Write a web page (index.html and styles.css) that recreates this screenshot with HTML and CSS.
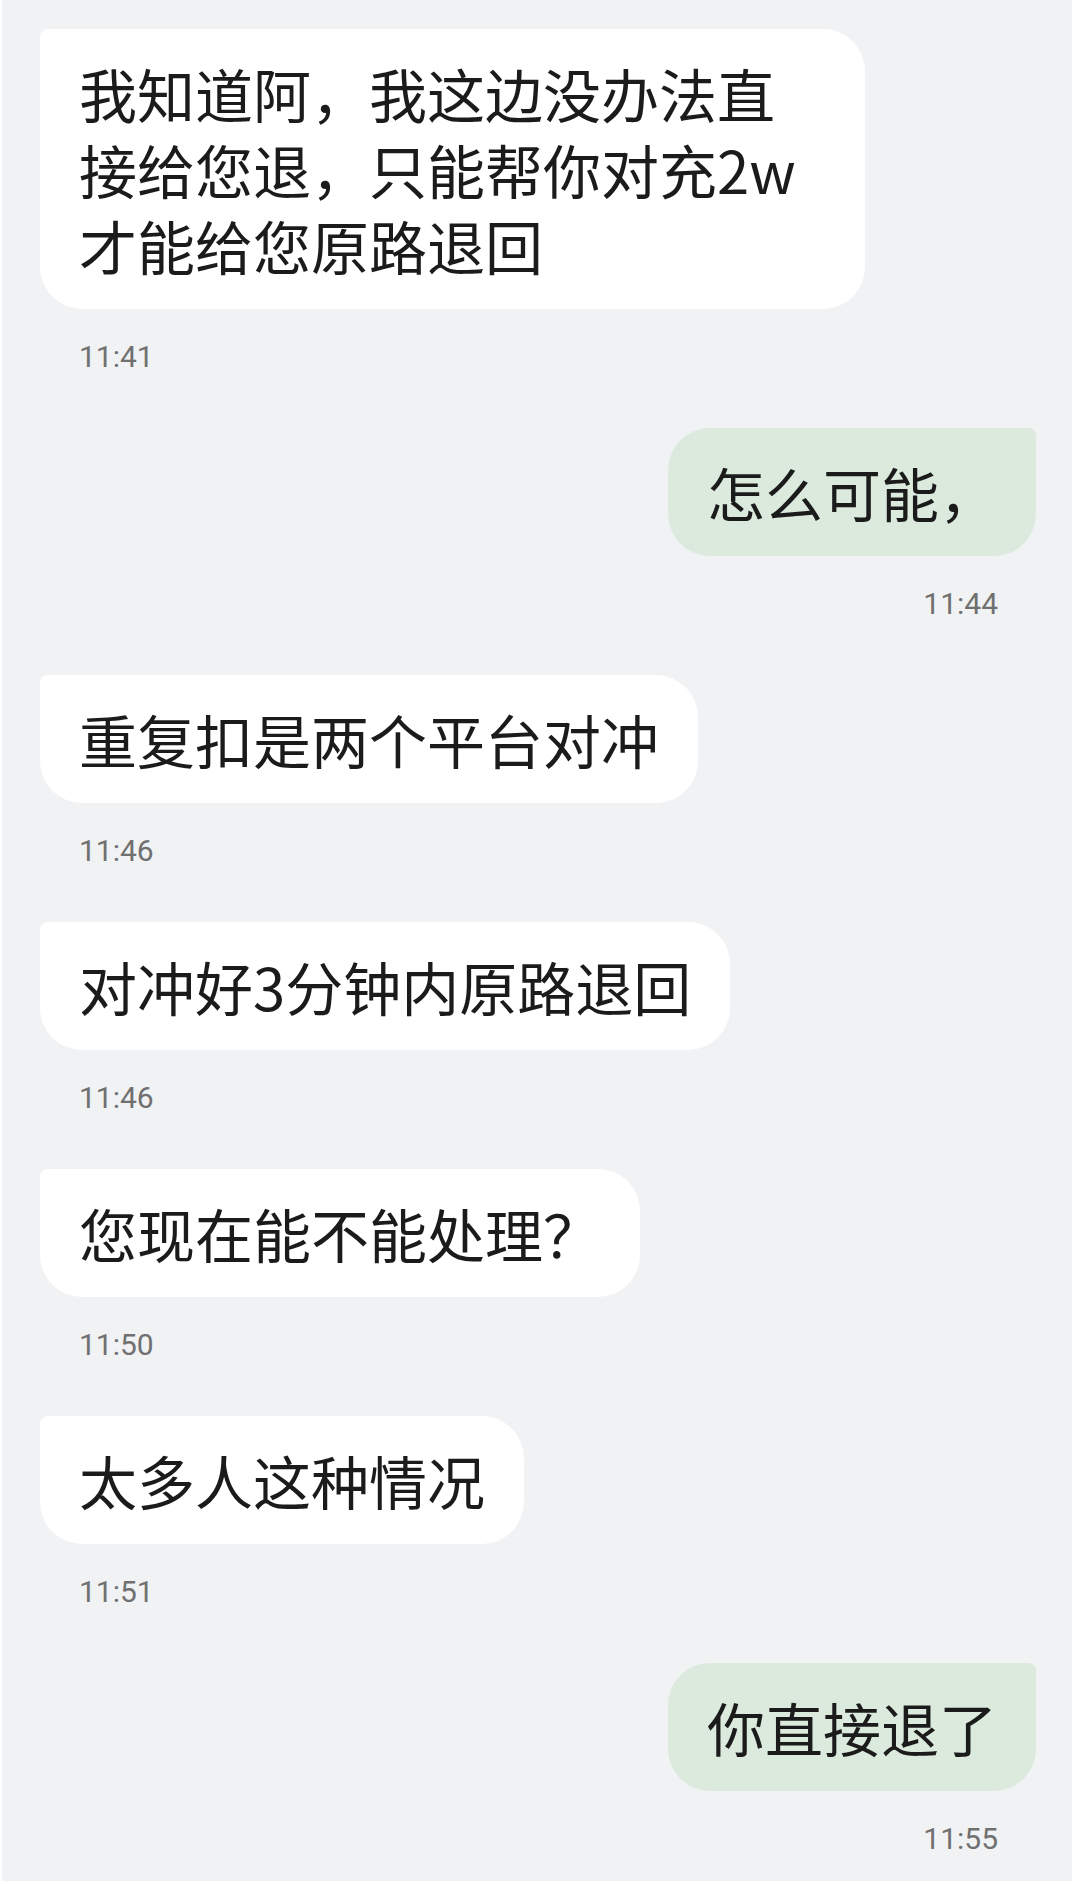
FILE: index.html
```html
<!DOCTYPE html>
<html lang="zh-CN">
<head>
  <meta charset="UTF-8" />
  <meta name="viewport" content="width=device-width, initial-scale=1" />
  <title>聊天记录</title>
  <link rel="stylesheet" href="styles.css">
</head>
<body>
  <main class="chat">
    <div class="msg in">
      <div class="bubble">我知道阿，我这边没办法直接给您退，只能帮你对充2w才能给您原路退回</div>
      <div class="time">11:41</div>
    </div>
    <div class="msg out">
      <div class="bubble">怎么可能，</div>
      <div class="time">11:44</div>
    </div>
    <div class="msg in">
      <div class="bubble">重复扣是两个平台对冲</div>
      <div class="time">11:46</div>
    </div>
    <div class="msg in">
      <div class="bubble">对冲好3分钟内原路退回</div>
      <div class="time">11:46</div>
    </div>
    <div class="msg in">
      <div class="bubble">您现在能不能处理？</div>
      <div class="time">11:50</div>
    </div>
    <div class="msg in">
      <div class="bubble">太多人这种情况</div>
      <div class="time">11:51</div>
    </div>
    <div class="msg out">
      <div class="bubble">你直接退了</div>
      <div class="time">11:55</div>
    </div>
  </main>
</body>
</html>
```

FILE: styles.css
```css
html, body {
  margin: 0;
  padding: 0;
  background: #fff;
}
body {
  font-family: "Noto Sans CJK SC", "Noto Sans", sans-serif;
  color: #1b1b1b;
}
.chat {
  margin: 0 8px 3px 2px;
  height: 1881px;
  box-sizing: border-box;
  padding: 29px 36px 0 38px;
  background: #f1f2f4;
  display: flex;
  flex-direction: column;
  gap: 51px;
}
.msg {
  display: flex;
  flex-direction: column;
}
.msg.in {
  align-items: flex-start;
}
.msg.out {
  align-items: flex-end;
}
.bubble {
  box-sizing: border-box;
  max-width: 825px;
  padding: 26px 39px;
  font-size: 58px;
  line-height: 76px;
  background: #fff;
  border-radius: 8px 42px 42px 42px;
}
.msg.out .bubble {
  background: #dbeadd;
  border-radius: 42px 8px 42px 42px;
}
.time {
  margin-top: 28px;
  padding: 0 39px;
  font-family: Roboto, "Noto Sans", sans-serif;
  font-size: 30px;
  line-height: 40px;
  color: #707070;
}
.msg.out .time {
  padding: 0 38px;
}
```
